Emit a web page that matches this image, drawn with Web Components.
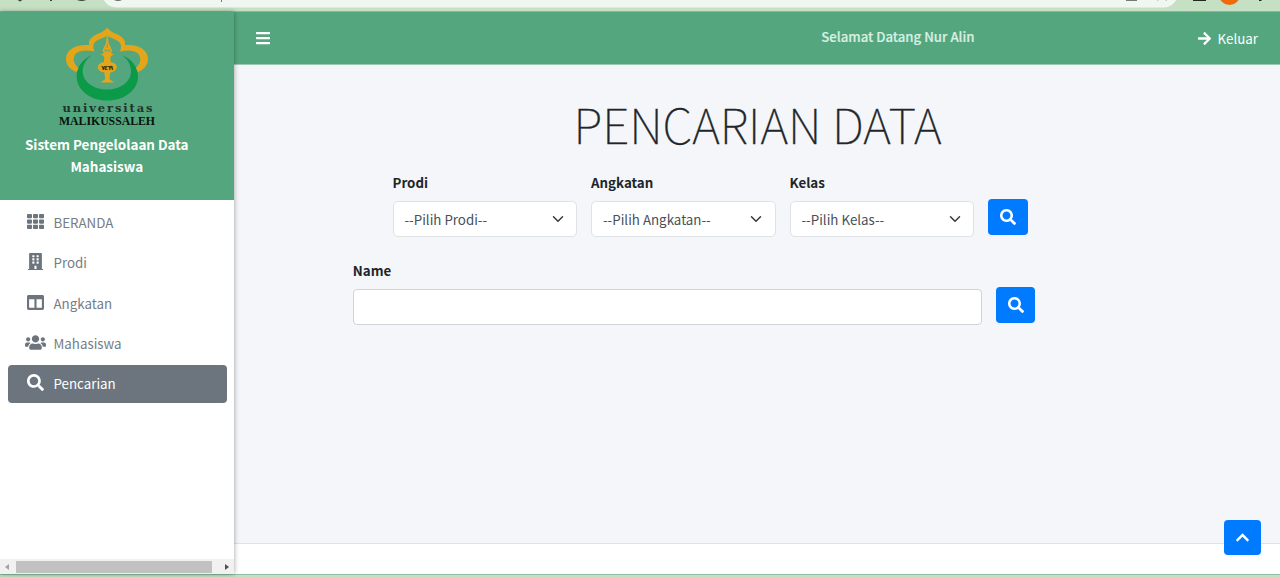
<!DOCTYPE html>
<html lang="id">
<head>
<meta charset="utf-8">
<title>Pencarian Data</title>
<style>
html,body{margin:0;height:100%;overflow:hidden}
body{font-family:"Noto Sans CJK SC","Noto Sans",sans-serif;font-size:13.340px;color:#212529;background:#c6e0c4}
</style>
</head>
<body>
<app-shell></app-shell>
<script>
const define = (name, html, setup) => customElements.define(name, class extends HTMLElement {
  constructor() {
    super();
    this.attachShadow({ mode: 'open' }).innerHTML = html;
  }
  connectedCallback() { if (setup) setup(this, this.shadowRoot); }
});

const ICONS = {
  grid: ['0 0 512 512', '<path d="M149.3 56v80c0 13.3-10.7 24-24 24H24c-13.3 0-24-10.7-24-24V56c0-13.3 10.7-24 24-24h101.300c13.300 0 24 10.700 24 24zm181.400 0v80c0 13.300-10.700 24-24 24H205.300c-13.300 0-24-10.700-24-24V56c0-13.300 10.700-24 24-24h101.400c13.300 0 24 10.700 24 24zM362.700 56v80c0 13.300 10.700 24 24 24H488c13.300 0 24-10.700 24-24V56c0-13.300-10.700-24-24-24H386.700c-13.300 0-24 10.700-24 24zM149.300 216v80c0 13.300-10.700 24-24 24H24c-13.300 0-24-10.700-24-24v-80c0-13.300 10.700-24 24-24h101.300c13.300 0 24 10.700 24 24zM330.700 216v80c0 13.300-10.700 24-24 24H205.300c-13.300 0-24-10.700-24-24v-80c0-13.300 10.700-24 24-24h101.400c13.300 0 24 10.700 24 24zM386.700 192H488c13.300 0 24 10.700 24 24v80c0 13.300-10.700 24-24 24H386.700c-13.300 0-24-10.700-24-24v-80c0-13.300 10.700-24 24-24zM149.300 376v80c0 13.300-10.700 24-24 24H24c-13.300 0-24-10.700-24-24v-80c0-13.300 10.700-24 24-24h101.300c13.300 0 24 10.700 24 24zM330.700 376v80c0 13.300-10.700 24-24 24H205.300c-13.300 0-24-10.700-24-24v-80c0-13.300 10.700-24 24-24h101.400c13.300 0 24 10.700 24 24zM386.700 352H488c13.300 0 24 10.700 24 24v80c0 13.300-10.700 24-24 24H386.700c-13.300 0-24-10.700-24-24v-80c0-13.300 10.700-24 24-24z"/>'],
  building: ['0 0 448 512', '<path fill-rule="evenodd" d="M436 480h-20V24c0-13.300-10.700-24-24-24H56C42.700 0 32 10.700 32 24v456H12c-6.600 0-12 5.400-12 12v20h448v-20c0-6.600-5.400-12-12-12zM128 76c0-6.600 5.400-12 12-12h40c6.600 0 12 5.400 12 12v40c0 6.600-5.400 12-12 12h-40c-6.600 0-12-5.400-12-12zM128 172c0-6.600 5.400-12 12-12h40c6.600 0 12 5.400 12 12v40c0 6.600-5.400 12-12 12h-40c-6.600 0-12-5.400-12-12zM180 320h-40c-6.600 0-12-5.400-12-12v-40c0-6.600 5.400-12 12-12h40c6.600 0 12 5.400 12 12v40c0 6.600-5.400 12-12 12zM256 480h-64v-84c0-6.600 5.400-12 12-12h40c6.600 0 12 5.400 12 12zM320 308c0 6.600-5.400 12-12 12h-40c-6.600 0-12-5.400-12-12v-40c0-6.600 5.400-12 12-12h40c6.600 0 12 5.400 12 12zM320 212c0 6.600-5.400 12-12 12h-40c-6.600 0-12-5.400-12-12v-40c0-6.600 5.400-12 12-12h40c6.600 0 12 5.400 12 12zM320 116c0 6.600-5.400 12-12 12h-40c-6.600 0-12-5.400-12-12V76c0-6.600 5.400-12 12-12h40c6.600 0 12 5.400 12 12z"/>'],
  columns: ['0 0 512 512', '<path fill-rule="evenodd" d="M464 32H48C21.500 32 0 53.500 0 80v352c0 26.500 21.500 48 48 48h416c26.500 0 48-21.500 48-48V80c0-26.500-21.500-48-48-48zM224 416H64V160h160zM448 416H288V160h160z"/>'],
  users: ['0 0 640 512', '<path d="M96 224c35.300 0 64-28.700 64-64s-28.700-64-64-64-64 28.700-64 64 28.700 64 64 64zm448 0c35.300 0 64-28.700 64-64s-28.700-64-64-64-64 28.700-64 64 28.700 64 64 64zm32 32h-64c-17.600 0-33.500 7.100-45.100 18.600 40.300 22.100 68.900 62 75.100 109.400h66c17.700 0 32-14.300 32-32v-32c0-35.300-28.700-64-64-64zm-256 0c61.900 0 112-50.100 112-112S381.900 32 320 32 208 82.100 208 144s50.100 112 112 112zm76.800 32h-8.300c-20.800 10-43.900 16-68.500 16s-47.600-6-68.500-16h-8.300C179.600 288 128 339.600 128 403.200V432c0 26.500 21.500 48 48 48h288c26.500 0 48-21.500 48-48v-28.800c0-63.600-51.600-115.200-115.200-115.200zm-223.700-13.400C161.500 263.100 145.600 256 128 256H64c-35.300 0-64 28.700-64 64v32c0 17.700 14.300 32 32 32h65.900c6.300-47.400 34.900-87.300 75.200-109.400z"/>'],
  search: ['0 0 512 512', '<path d="M505 442.700L405.300 343c-4.500-4.500-10.600-7-17-7H372c27.600-35.300 44-79.700 44-128C416 93.100 322.900 0 208 0S0 93.100 0 208s93.100 208 208 208c48.300 0 92.700-16.400 128-44v16.300c0 6.400 2.500 12.500 7 17l99.700 99.700c9.400 9.400 24.600 9.400 33.900 0l28.300-28.300c9.400-9.400 9.400-24.600.1-34zM208 336c-70.700 0-128-57.200-128-128 0-70.700 57.200-128 128-128 70.700 0 128 57.200 128 128 0 70.700-57.200 128-128 128z"/>'],
  bars: ['0 0 448 512', '<path d="M16 132h416c8.800 0 16-7.200 16-16V76c0-8.800-7.200-16-16-16H16C7.200 60 0 67.200 0 76v40c0 8.800 7.200 16 16 16zm0 160h416c8.800 0 16-7.200 16-16v-40c0-8.800-7.200-16-16-16H16c-8.800 0-16 7.200-16 16v40c0 8.800 7.200 16 16 16zm0 160h416c8.800 0 16-7.200 16-16v-40c0-8.800-7.200-16-16-16H16c-8.800 0-16 7.200-16 16v40c0 8.800 7.200 16 16 16z"/>'],
  arrow: ['0 0 448 512', '<path d="M190.500 66.900l22.200-22.200c9.400-9.400 24.600-9.400 33.900 0L441 239c9.400 9.400 9.400 24.600 0 33.900L246.600 467.300c-9.400 9.400-24.600 9.400-33.900 0l-22.200-22.200c-9.500-9.500-9.300-25 .4-34.300L311.400 296H24c-13.300 0-24-10.700-24-24v-32c0-13.300 10.700-24 24-24h287.400L190.900 101.200c-9.800-9.300-10-24.800-.4-34.300z"/>'],
  up: ['0 0 448 512', '<path d="M240.971 130.524l194.343 194.343c9.373 9.373 9.373 24.569 0 33.941l-22.667 22.667c-9.357 9.357-24.522 9.375-33.901.04L224 227.495 69.255 381.516c-9.379 9.335-24.544 9.317-33.901-.04l-22.667-22.667c-9.373-9.373-9.373-24.569 0-33.941L207.030 130.525c9.372-9.373 24.568-9.373 33.941-.001z"/>'],
  chevron: ['0 0 16 16', '<path d="M2 5l6 6 6-6" fill="none" stroke="#343a40" stroke-width="2" stroke-linecap="round" stroke-linejoin="round"/>']
};

define('ui-icon', `<style>:host{display:inline-flex;flex:none}svg{display:block;width:var(--w,16px);height:var(--w,16px);fill:currentColor}</style><svg></svg>`, (el, root) => {
  const [box, body] = ICONS[el.getAttribute('name')];
  const svg = root.querySelector('svg');
  svg.setAttribute('viewBox', box);
  svg.innerHTML = body;
  if (el.hasAttribute('size')) el.style.setProperty('--w', el.getAttribute('size') + 'px');
});

define('browser-edge', `<style>
:host{display:block;height:11px;overflow:hidden;background:#c6e0c4;border-bottom:1px solid #82bb9a}
svg{display:block}
</style>
<svg width="1280" height="11" viewBox="0 0 1280 11">
<rect x="102" y="-22" width="1076" height="29.500" rx="14.700" fill="#f0f7f1"/>
<g fill="#3c463e"><path d="M18 0h4l-1 1.200h-2zM50 0h2v1h-2zM77 0h9q-4 2-9 0z"/><path d="M114 0h8q-4 2-8 0z" opacity=".8"/><path d="M221 0h1v2h-1zM1126 0h11v1h-11z" opacity=".7"/><path d="M1157 0h2l-2 1zM1165 0h2v1z" opacity=".35"/><path fill="#1f2922" d="M1193 0h13v1h-13zM1259 0h3l-1 1h-2z"/></g>
<circle cx="1229.500" cy="-5.500" r="10.500" fill="#f06a0a"/>
</svg>`);

define('brand-logo', `<style>:host{display:block}svg{display:block}</style>
<svg width="100" height="104" viewBox="0 0 100 104" role="img" aria-label="Universitas Malikussaleh">
<path fill="#0b9a48" d="M34.500 30.500C24 35 19.700 43 19.700 51.500C19.700 65 33 75.500 50.300 75.500C67.500 75.500 81 65 81 51.500C81 42 75 34 64.500 30C71 34 74 40 74 46.500C74 57 63 64.500 50 64.500C37 64.500 25.700 57 25.700 46.500C25.700 40 29 34 34.500 30.500Z"/>
<path fill="#e4a51b" d="M50.300 2.500C46 8 40 8.500 36 11.500C32.500 14 31.500 17 32 20C19 19 9 24.500 9 33.500C9 39.500 12 44 19.500 47L21.500 43C17 39 15 34 18.500 29C21.500 25.500 28 24.500 37.500 26.500C34.500 19 38 16 42 14.500C46 12.500 48.500 12.500 50.300 10.500C52 12.500 54 12.500 58 14.500C62 16 66 19 63 26.500C72 24.500 78 25.500 81.500 29C85 34 83 39 79 43L81 47C88 44 91 39.500 91 33.500C91 24.500 81 19 68 20C68.500 17 67.500 14 64 11.500C60 8.500 54 8 50.300 2.500Z"/>
<path fill="#e4a51b" d="M49.800 11h1l.8 7 3.600 7.500-1.400 2.500 3 1.300-2.800 1.700-.8 2 .6 4c3.700.6 6 2.300 6 5 0 3-3 5-6.600 5.400l-.8 6.300c.6 1.600 3 2 4.700 3.800H43.500c1.700-1.800 4-2.200 4.700-3.800l-.8-6.300c-3.600-.4-6.600-2.400-6.600-5.400 0-2.700 2.300-4.400 6-5l.6-4-.8-2-2.800-1.700 3-1.300-1.400-2.500 3.600-7.500z"/>
<g fill="none" stroke="#54a67e" stroke-width=".8"><path d="M50.300 19v4"/><circle cx="48.600" cy="25.600" r=".9"/><circle cx="52" cy="25.600" r=".9"/></g>
<text x="50.300" y="44.500" text-anchor="middle" font-family="DejaVu Sans" font-weight="bold" font-size="6.500" fill="#3e3210" textLength="12">٧٤٦٩</text>
<text x="5.500" y="87" font-family="DejaVu Serif" font-size="11.500" fill="#1b3527" textLength="90">universitas</text>
<text x="2" y="99.500" font-family="Liberation Serif" font-weight="bold" font-size="12" fill="#08130d" textLength="96" lengthAdjust="spacingAndGlyphs">MALIKUSSALEH</text>
</svg>`);

define('nav-item', `<style>
:host{display:flex;align-items:center;box-sizing:border-box;height:37.500px;margin:0 7.500px 2.900px;color:#767d84;border-radius:4px;line-height:22px}
.i{width:46px;padding-left:10px;box-sizing:border-box;display:flex;justify-content:center;padding-bottom:2px;color:#6c757d}
:host([active]){background:#6c757d;color:#fff}
:host([active]) .i{color:#fff}
.t{padding-top:1px}
</style><span class="i"><slot name="icon"></slot></span><span class="t"><slot></slot></span>`);

define('side-bar', `<style>
:host{display:flex;flex-direction:column;width:234px;flex:none;background:#fff;box-shadow:0 0 5px rgba(0,0,0,.38);z-index:2;position:relative}
header{height:187.500px;box-sizing:border-box;padding-top:13px;background:#54a67e;color:#fff;display:flex;flex-direction:column;align-items:center;font-weight:700;text-align:center;line-height:22px;padding-right:20.500px}
header div{font-size:13.450px}
header brand-logo{height:107.500px}
nav{flex:1;padding-top:4px}
footer{height:15px;background:#f1f1f1;display:flex;align-items:center;padding:0 4px;gap:6px}
footer i{flex:1;height:12px;background:#c1c1c1;margin-right:6px}
</style>
<header><brand-logo></brand-logo><div>Sistem Pengelolaan Data<br>Mahasiswa</div></header>
<nav>
<nav-item><ui-icon slot="icon" name="grid" size="17"></ui-icon>BERANDA</nav-item>
<nav-item><ui-icon slot="icon" name="building" size="17"></ui-icon>Prodi</nav-item>
<nav-item><ui-icon slot="icon" name="columns" size="17"></ui-icon>Angkatan</nav-item>
<nav-item><ui-icon slot="icon" name="users" size="21"></ui-icon>Mahasiswa</nav-item>
<nav-item active><ui-icon slot="icon" name="search" size="17"></ui-icon>Pencarian</nav-item>
</nav>
<footer><svg width="6" height="8"><path d="M5 1v6L1 4z" fill="#a3a3a3"/></svg><i></i><svg width="6" height="8"><path d="M1 1v6l4-3z" fill="#505050"/></svg></footer>`);

define('top-bar', `<style>
:host{display:flex;align-items:center;height:53px;background:#54a67e;color:#fff;box-sizing:border-box;padding:0 22px 0 21.300px;border-bottom:1px solid #9ccab2}
.w{margin-left:auto;margin-right:222px;font-weight:500;font-size:13.200px;color:#d7f0e2;padding-bottom:4px;-webkit-text-stroke:.2px #d7f0e2}
.k{display:flex;align-items:center;gap:6px;line-height:20px;padding-top:1px}
</style><ui-icon name="bars" size="16"></ui-icon><span class="w">Selamat Datang Nur Alin</span><span class="k"><ui-icon name="arrow" size="15"></ui-icon>Keluar</span>`);

define('select-field', `<style>
:host{display:block;width:184.500px}
label{display:block;font-weight:700;line-height:22px;height:28.500px;padding-top:1px}
div{height:36px;box-sizing:border-box;border:1px solid #dee2e6;border-radius:5px;background:#fff;display:flex;align-items:center;justify-content:space-between;padding:0 12.500px 0 11px;color:#495057}
span{padding-top:1px}
</style><label></label><div><span><slot></slot></span><ui-icon name="chevron" size="12"></ui-icon></div>`,
(el, root) => { root.querySelector('label').textContent = el.getAttribute('label'); });

define('text-field', `<style>
:host{display:block;width:629px}
label{display:block;font-weight:700;line-height:22px;height:28.500px;padding-top:.5px}
input{display:block;width:100%;height:36px;box-sizing:border-box;border:1px solid #ced4da;border-radius:4px;background:#fff;outline:0}
</style><label></label><input type="text">`,
(el, root) => { root.querySelector('label').textContent = el.getAttribute('label'); });

define('icon-button', `<style>
:host{display:flex;align-items:center;justify-content:center;width:39.500px;height:35.500px;border-radius:4px;background:#007bff;color:#fff;box-sizing:border-box;flex:none}
</style><slot></slot>`);

define('search-page', `<style>
:host{display:flex;flex-direction:column;flex:1;background:#f4f6f9}
h1{margin:0 3px 0 0;padding:25px 0 0 4px;text-align:center;font-weight:100;font-size:48px;line-height:66px;height:81px;-webkit-text-stroke:.35px #212529}
.row{display:flex;align-items:flex-end;gap:14px}
.a{padding-left:158.500px}
.b{padding-left:118.800px;margin-top:23px}
icon-button{margin-bottom:2px}
</style>
<h1>PENCARIAN DATA</h1>
<div class="row a">
<select-field label="Prodi">--Pilih Prodi--</select-field>
<select-field label="Angkatan">--Pilih Angkatan--</select-field>
<select-field label="Kelas">--Pilih Kelas--</select-field>
<icon-button><ui-icon name="search" size="16"></ui-icon></icon-button>
</div>
<div class="row b"><text-field label="Name"></text-field><icon-button><ui-icon name="search" size="16"></ui-icon></icon-button></div>`);

define('app-shell', `<style>
:host{display:flex;flex-direction:column;height:577px;box-sizing:border-box;border-bottom:2px solid #c6e0c4;position:relative}
.body{display:flex;flex:1;min-height:0}
main{display:flex;flex-direction:column;flex:1;min-width:0}
.foot{height:30px;background:#fff;border-top:1px solid #dee2e6}
.top{position:absolute;right:19px;bottom:20px;width:37.500px;height:35.500px;z-index:3}
.line{height:1px;background:#8fc0a2}
</style>
<browser-edge></browser-edge>
<div class="body"><side-bar></side-bar><main><top-bar></top-bar><search-page></search-page><div class="foot"></div></main></div>
<div class="line"></div>
<icon-button class="top"><ui-icon name="up" size="15"></ui-icon></icon-button>`);
</script>
</body>
</html>
